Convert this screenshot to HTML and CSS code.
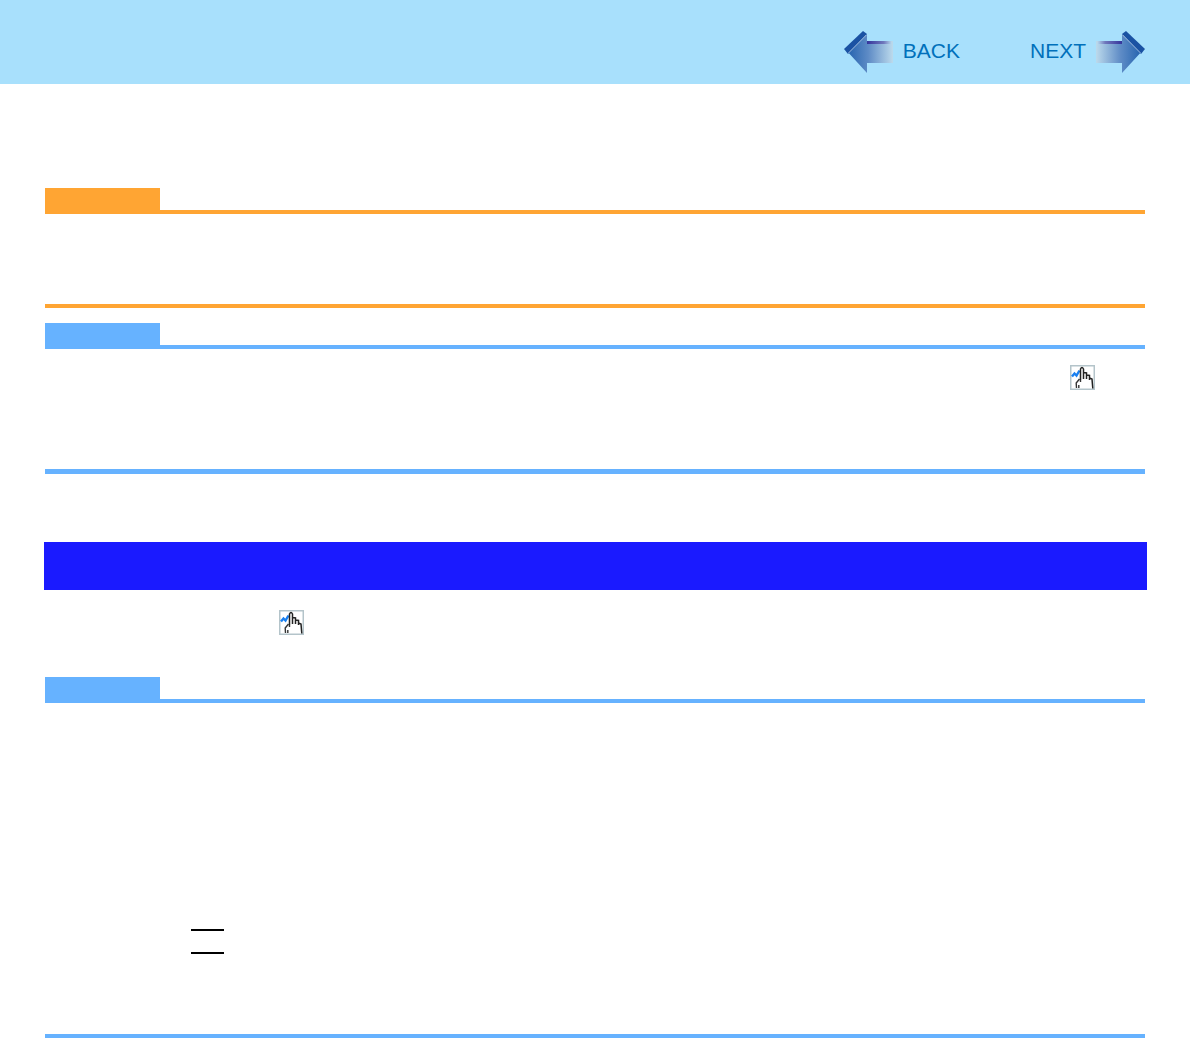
FILE: index.html
```html
<!DOCTYPE html>
<html lang="en">
<head>
<meta charset="utf-8">
<title>Reference manual page</title>
<link rel="stylesheet" href="styles.css">
</head>
<body>
<svg class="defs" width="0" height="0" aria-hidden="true">
  <defs>
    <linearGradient id="back-body" gradientUnits="userSpaceOnUse" x1="0" y1="0" x2="49" y2="0">
      <stop offset="0" stop-color="#1a5cab"/>
      <stop offset="0.5" stop-color="#5f8cc6"/>
      <stop offset="1" stop-color="#bcdaec"/>
    </linearGradient>
    <linearGradient id="next-body" gradientUnits="userSpaceOnUse" x1="48" y1="0" x2="-1" y2="0">
      <stop offset="0" stop-color="#1a5cab"/>
      <stop offset="0.5" stop-color="#5f8cc6"/>
      <stop offset="1" stop-color="#bcdaec"/>
    </linearGradient>
    <linearGradient id="back-strip" x1="0" y1="0" x2="1" y2="0">
      <stop offset="0" stop-color="#34349c"/>
      <stop offset="0.7" stop-color="#7078bc"/>
      <stop offset="1" stop-color="#b0d0ea"/>
    </linearGradient>
    <linearGradient id="next-strip" x1="1" y1="0" x2="0" y2="0">
      <stop offset="0" stop-color="#34349c"/>
      <stop offset="0.7" stop-color="#7078bc"/>
      <stop offset="1" stop-color="#b0d0ea"/>
    </linearGradient>
    <symbol id="hand" viewBox="0 0 25 25">
      <rect x="0.75" y="0.75" width="23.500" height="23.500" fill="#fff" stroke="#b4c4ca" stroke-width="1.500"/>
      <path d="M2 11.500 L4.500 8.500 L6.500 10.500 L9.500 5.500" fill="none" stroke="#1a80f0" stroke-width="2.400"/>
      <path d="M10.500 15 L10.500 4 Q12 1 13.500 4 L13.500 14 M13.500 7.500 L16.500 8 L16.500 14 M16.500 10 L19.500 10.500 L19.500 15 M19.500 13 L22 14 L22.800 23.500" fill="none" stroke="#222" stroke-width="1.500"/>
      <path d="M9.500 14 L6.200 18 L6.500 23 M8.800 23 L8.800 20 M10.500 15 L10.500 17" fill="none" stroke="#333" stroke-width="1.400"/>
    </symbol>
  </defs>
</svg>
<header class="top-bar">
  <nav class="pager">
    <a class="pager-link" href="#back">
      <svg class="arrow" viewBox="0 0 49 44" width="49" height="44" aria-hidden="true">
        <path d="M2 20 L23 4 L23 11 L49 11 L49 33 L23 33 L23 43 Z" fill="url(#back-body)"/>
        <path d="M0 19 L19 1 L23 4 L4 24 Z" fill="#1a52a3"/>
        <path d="M4.500 23 L22.500 4.800" stroke="#b4cce6" stroke-width="0.900" fill="none"/>
        <rect x="23" y="11" width="24" height="3" fill="url(#back-strip)"/>
      </svg>
      <span class="pager-text">BACK</span>
    </a>
    <a class="pager-link next" href="#next">
      <span class="pager-text">NEXT</span>
      <svg class="arrow" viewBox="-1 0 49 44" width="49" height="44" aria-hidden="true">
        <path d="M46 20 L25 4 L25 11 L-1 11 L-1 33 L25 33 L25 43 Z" fill="url(#next-body)"/>
        <path d="M48 19 L29 1 L25 4 L44 24 Z" fill="#1a52a3"/>
        <path d="M43.500 23 L25.500 4.800" stroke="#b4cce6" stroke-width="0.900" fill="none"/>
        <rect x="1" y="11" width="24" height="3" fill="url(#next-strip)"/>
      </svg>
    </a>
  </nav>
</header>
<main class="content">
  <section class="note orange first-note">
    <div class="tab"></div>
    <div class="note-body caution-body"></div>
  </section>
  <section class="note blue second-note">
    <div class="tab"></div>
    <div class="note-body second-body">
      <svg class="hand hand-right"><use href="#hand"/></svg>
    </div>
  </section>
  <div class="section-bar"></div>
  <div class="intro-line">
    <svg class="hand"><use href="#hand"/></svg>
  </div>
  <section class="note blue third-note">
    <div class="tab"></div>
    <div class="note-body third-body">
      <span class="rule"></span>
      <span class="rule"></span>
    </div>
  </section>
</main>
</body>
</html>
```
FILE: styles.css
```css
* { box-sizing: border-box; }
html, body { margin: 0; padding: 0; background: #fff; }
body { width: 1190px; height: 1043px; overflow: hidden; font-family: "Liberation Sans", Arial, sans-serif; }
.defs { display: block; height: 0; }

.top-bar { height: 84px; background: #a8e0fc; display: flex; justify-content: flex-end; padding: 30px 45px 0 0; }
.pager { display: flex; align-items: flex-start; gap: 70px; }
.pager-link { display: flex; align-items: flex-start; gap: 10px; color: #0070bb; text-decoration: none; }
.pager-text { font-size: 21px; line-height: 42px; }
.arrow { display: block; }

.content { padding: 104px 43px 0 44px; }
.note { margin-left: 1px; margin-right: 2px; }
.tab { width: 115px; height: 26px; }
.orange .tab { background: #ffa533; }
.blue .tab { background: #66b2ff; }
.note-body { border-style: solid; border-width: 4px 0; margin-top: -4px; }
.orange .note-body { border-color: #ffa533; }
.blue .note-body { border-color: #66b2ff; }

.caution-body { height: 98px; }
.second-note { margin-top: 15px; }
.second-body { height: 129px; border-bottom-width: 5px; display: flex; justify-content: flex-end; align-items: flex-start; padding: 16px 50px 0 0; }
.hand { display: block; width: 25px; height: 25px; flex: none; }

.section-bar { height: 48px; background: #1a1aff; margin-top: 68px; }
.intro-line { padding: 20px 0 0 235px; }
.third-note { margin-top: 42px; }
.third-body { height: 339px; padding: 226px 0 0 146px; }
.rule { display: block; width: 33px; height: 2px; background: #000; margin-bottom: 21px; }
```
